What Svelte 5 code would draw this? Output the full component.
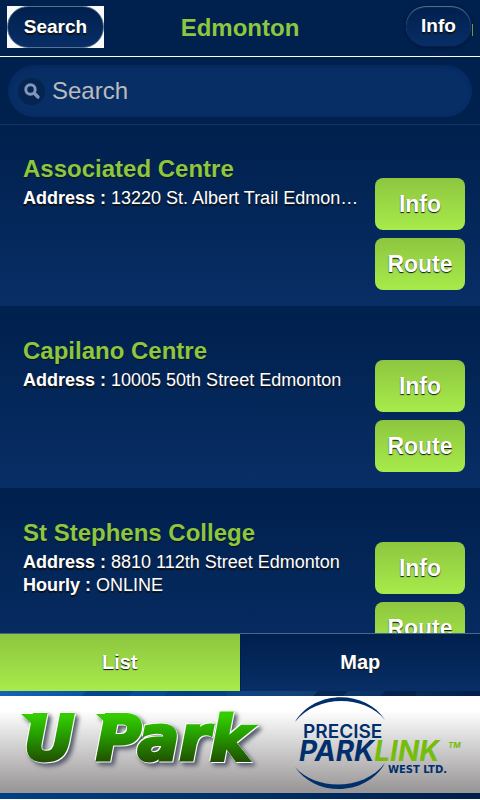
<script>
  const locations = [
    { name: 'Associated Centre', address: '13220 St. Albert Trail Edmonton' },
    { name: 'Capilano Centre', address: '10005 50th Street Edmonton' },
    { name: 'St Stephens College', address: '8810 112th Street Edmonton', hourly: 'ONLINE' }
  ];
  let query = $state('');
  let view = $state('List');
</script>

<div class="page">
  <header>
    <div class="focus"><button class="pill">Search</button></div>
    <h1>Edmonton</h1>
    <button class="pill info">Info</button>
    <i class="sliver"></i>
  </header>

  <form class="filter" role="search">
    <label class="field">
      <span class="lens">
        <svg width="18" height="18" viewBox="0 0 18 18" aria-hidden="true">
          <circle cx="7.5" cy="7.5" r="4.7" fill="none" stroke="#8196ba" stroke-width="3" />
          <path d="M11.5 11.5l3.5 3.5" stroke="#8196ba" stroke-width="3.4" stroke-linecap="round" />
        </svg>
      </span>
      <input type="text" placeholder="Search" aria-label="Search" bind:value={query} />
    </label>
  </form>

  <ul>
    {#each locations as place}
      <li>
        <div class="details">
          <h2>{place.name}</h2>
          <p><b>Address :</b> {place.address}</p>
          {#if place.hourly}<p><b>Hourly :</b> {place.hourly}</p>{/if}
        </div>
        <div class="actions">
          <button>Info</button>
          <button>Route</button>
        </div>
      </li>
    {/each}
  </ul>

  <nav>
    {#each ['List', 'Map'] as tab}
      <button class:active={view === tab} onclick={() => (view = tab)}>{tab}</button>
    {/each}
  </nav>

  <footer>
    <svg class="stripes" height="5" width="100%" viewBox="0 0 480 5" preserveAspectRatio="none" aria-hidden="true">
      <defs>
        <linearGradient id="strip">
          <stop offset="0" stop-color="#1762b2" />
          <stop offset=".3" stop-color="#004a99" />
          <stop offset=".6" stop-color="#14427a" />
          <stop offset="1" stop-color="#001f49" />
        </linearGradient>
      </defs>
      <path d="M0 0h480v5H0z" fill="url(#strip)" />
      <path d="M86 0h47l-4 5H82zM168 0h59v5h-63z" fill="#003c80" opacity=".6" />
      <path d="M318 0h30l-5 5h-30zM385 0h31v5h-35z" fill="#001c42" opacity=".6" />
    </svg>
    <div class="logos">
      <svg class="upark" viewBox="0 0 280 97" role="img" aria-label="U Park">
        <defs>
          <linearGradient id="green" gradientUnits="userSpaceOnUse" x1="0" y1="20" x2="0" y2="66">
            <stop offset="0" stop-color="#35cc00" />
            <stop offset=".35" stop-color="#27a500" />
            <stop offset="1" stop-color="#204f00" />
          </linearGradient>
        </defs>
        <g class="word">
          <text x="24" y="64">U</text>
          <text x="96" y="64">Park</text>
          <path d="M21 18h22l-8 13zM96 18h22l-8 13z" fill="url(#green)" />
        </g>
      </svg>
      <svg class="precise" viewBox="0 0 190 97" role="img" aria-label="Precise ParkLink West Ltd.">
        <path d="M5 26C25-7 76-6 95 24C75-1 27-2 5 26Z" fill="#002f6c" />
        <path d="M5 71C25 101 76 101 95 67C75 94 27 96 5 71Z" fill="#002f6c" />
        <text class="one" x="13" y="42">PRECISE</text>
        <text class="two" x="9" y="65">PARK<tspan class="link">LINK</tspan></text>
        <text class="tm" x="158" y="52">TM</text>
        <text class="west" x="98" y="77">WEST LTD.</text>
      </svg>
    </div>
    <div class="base"></div>
  </footer>
</div>

<style>
  :global(body) {
    background: #fff;
  }
  .page {
    box-sizing: border-box;
    height: 100vh;
    padding-bottom: 1px;
    display: flex;
    flex-direction: column;
    overflow: hidden;
    font-family: 'Liberation Sans', Arial, sans-serif;
    color: #fff;
  }
  button {
    font: inherit;
    font-weight: bold;
    color: #fff;
    border: 0;
    padding: 0;
    text-shadow: 0 2px 1px #111;
  }
  h1,
  h2,
  p,
  ul {
    margin: 0;
    padding: 0;
  }
  header {
    box-sizing: border-box;
    position: relative;
    height: 57px;
    flex: none;
    display: flex;
    align-items: flex-start;
    justify-content: space-between;
    padding: 5px 8px 0 7px;
    background: #00204d;
    border-bottom: 1px solid #fff;
  }
  .focus {
    background: #fafafa;
    margin-top: 1px;
    height: 42px;
  }
  .pill {
    display: block;
    box-sizing: border-box;
    height: 42px;
    border-radius: 21px;
    font-size: 19px;
    background: linear-gradient(#00204d, #082e66);
    border: 1px solid #5b7294;
  }
  .focus .pill {
    width: 97px;
  }
  .pill.info {
    width: 67px;
    border-color: transparent;
    background-clip: padding-box;
    box-shadow: inset 0 1px 1px #5b7294, 0 1px 3px #00183d;
  }
  h1 {
    position: absolute;
    left: 0;
    right: 0;
    top: 14px;
    text-align: center;
    font-size: 24px;
    line-height: 28px;
    color: #8dc63f;
    pointer-events: none;
  }
  .sliver {
    position: absolute;
    right: 7px;
    top: 24px;
    width: 1px;
    height: 12px;
    background: #6b9b3c;
  }
  .filter {
    position: relative;
    flex: none;
    padding: 8px 8px 7px;
    background: #00204d;
    box-shadow: 0 1px 0 #15345f;
  }
  .field {
    display: flex;
    align-items: center;
    gap: 7px;
    height: 52px;
    padding: 0 10px;
    border-radius: 26px;
    background: #082e66;
    box-shadow: inset 0 2px 4px #05265a;
  }
  .lens {
    display: grid;
    place-items: center;
    width: 27px;
    height: 27px;
    border-radius: 50%;
    background: #052550;
  }
  input {
    flex: 1;
    min-width: 0;
    padding: 0;
    border: 0;
    outline: 0;
    background: none;
    font: 24px 'Liberation Sans', Arial, sans-serif;
    color: #fff;
  }
  input::placeholder {
    color: #bbb;
    opacity: 1;
  }
  ul {
    flex: 1;
    min-height: 0;
    overflow: hidden;
    list-style: none;
  }
  li {
    box-sizing: border-box;
    height: 182px;
    display: flex;
    gap: 15px;
    padding: 31px 15px 0 23px;
    background: linear-gradient(#00204d, #082e66);
  }
  .details {
    flex: 1;
    min-width: 0;
  }
  h2 {
    font-size: 24px;
    line-height: 28px;
    color: #8dc63f;
    text-shadow: 0 1px 1px #111;
    margin-bottom: 4px;
  }
  p {
    font-size: 18px;
    line-height: 23px;
    white-space: nowrap;
    overflow: hidden;
    text-overflow: ellipsis;
    text-shadow: 0 2px 1px #111;
  }
  .actions {
    width: 90px;
    padding-top: 23px;
    display: flex;
    flex-direction: column;
    gap: 8px;
  }
  .actions button {
    height: 52px;
    border-radius: 8px;
    font-size: 23px;
    text-shadow: 0 1px 1px #111;
    background: linear-gradient(#8dc63f, #a7eb4b);
  }
  nav {
    flex: none;
    display: flex;
    height: 57px;
    border-top: 1px solid #4b648a;
  }
  nav button {
    flex: 1;
    font-size: 20px;
    text-shadow: 0 1px 1px #111;
    background: linear-gradient(#00204d, #082e66);
  }
  nav button:first-child {
    border-right: 1px solid #00204d;
  }
  nav .active {
    background: linear-gradient(#8dc63f, #a7eb4b);
  }
  footer {
    flex: none;
  }
  .stripes {
    display: block;
  }
  .logos {
    display: flex;
    justify-content: space-between;
    height: 97px;
    background: linear-gradient(#fff 15%, #9b9899 96%);
  }
  .logos svg {
    height: 97px;
    flex: none;
  }
  .upark {
    width: 280px;
  }
  .precise {
    width: 190px;
  }
  .word {
    filter: drop-shadow(1px 1px 0 #fff) drop-shadow(-1px -1px 0 #fff) drop-shadow(3px 3px 2px #555b6c);
  }
  .word text {
    font: italic bold 62px 'DejaVu Sans', sans-serif;
    fill: url(#green);
    stroke: url(#green);
    stroke-width: 3px;
  }
  .one {
    font: 600 19px Inter, sans-serif;
    fill: #002f6c;
  }
  .two {
    font: italic bold 28px Inter, sans-serif;
    fill: #002f6c;
  }
  .link {
    fill: #74bd0c;
  }
  .tm {
    font: italic bold 8px Inter, sans-serif;
    fill: #74bd0c;
  }
  .west {
    font: bold 10px 'DejaVu Sans', sans-serif;
    fill: #002f6c;
  }
  .base {
    height: 6px;
    background: linear-gradient(90deg, #004084, #001f49);
  }
</style>
